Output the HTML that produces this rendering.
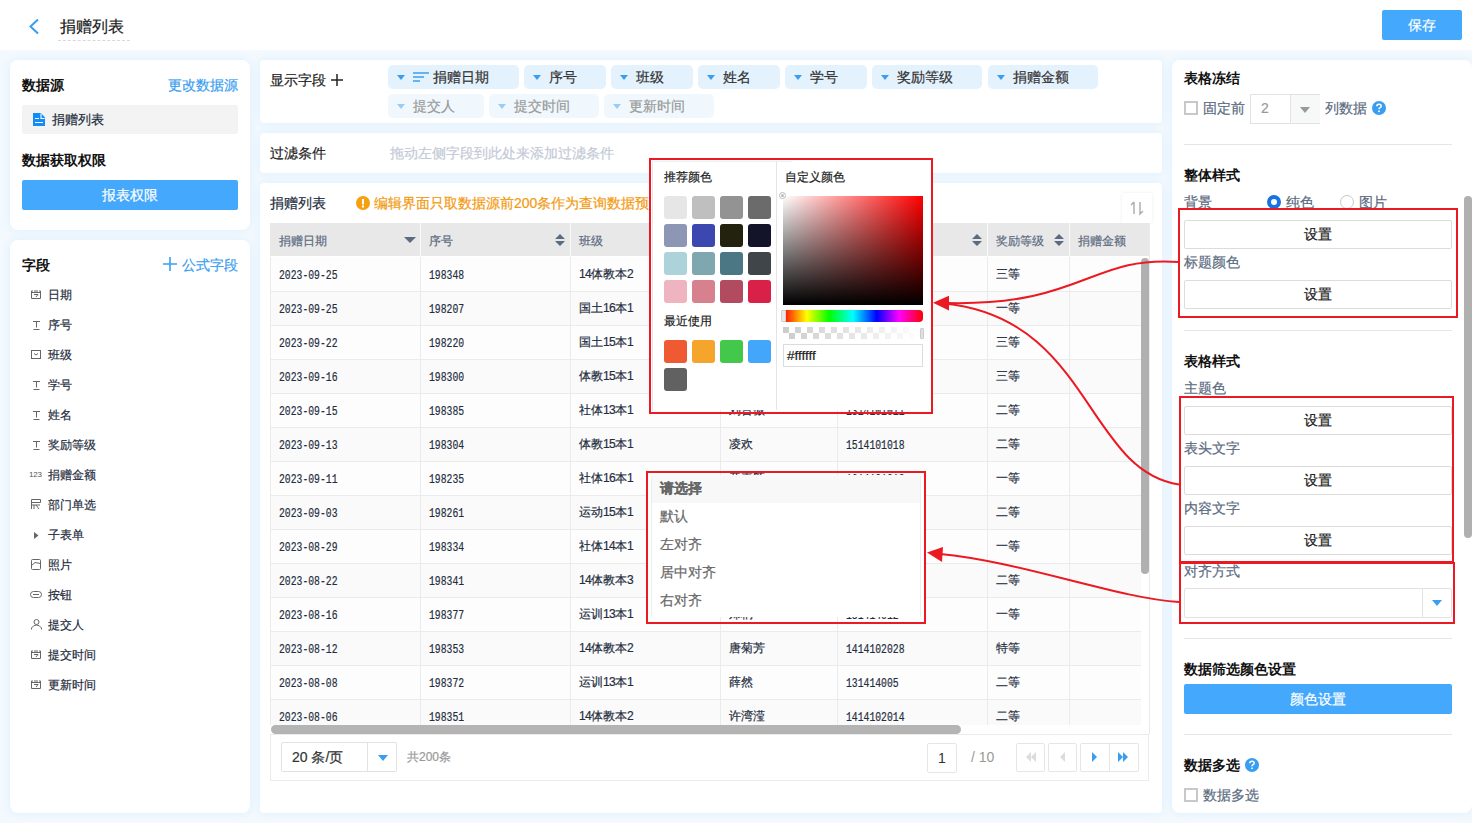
<!DOCTYPE html><html><head><meta charset="utf-8"><style>
*{box-sizing:border-box;margin:0;padding:0}
html,body{width:1472px;height:823px;overflow:hidden}
body{position:relative;background:#f3f9fe;font-family:"Liberation Sans",sans-serif;color:#333;font-size:14px;-webkit-text-stroke-width:0.2px}
.a{position:absolute;white-space:nowrap}
.p{position:absolute;background:#fff;box-shadow:0 0 10px rgba(0,160,250,.1)}
.b{font-weight:bold;color:#111;-webkit-text-stroke-width:0}
.blue{color:#3a9ef0}
.btnb{position:absolute;background:#44a8fc;color:#fff;text-align:center;border-radius:2px}
.tag{position:absolute;height:24px;background:#e4f2fd;border-radius:5px;line-height:24px;font-size:14px;color:#333;padding-left:25px;white-space:nowrap}
.tag i{position:absolute;left:9px;top:10px;width:0;height:0;border-left:4px solid transparent;border-right:4px solid transparent;border-top:5px solid #3a9ef0}
.tag.l{background:#f0f8fe;color:#9a9a9a}
.tag.l i{border-top-color:#99cdf6}
.fi{position:absolute;left:48px;font-size:12px;color:#1f2d3d;line-height:16px;white-space:nowrap}
.hd{position:absolute;font-size:12px;color:#5b6b80;line-height:14px;white-space:nowrap}
.c{position:absolute;font-size:12px;color:#1f2d3d;line-height:14px;white-space:nowrap}
.n{margin-top:1.5px;transform:scaleX(.75);transform-origin:0 0;font-size:13px;font-family:"Liberation Mono",monospace;color:#1f2d3d}
.sbtn{position:absolute;left:1184px;width:268px;height:29px;border:1px solid #dcdcdc;border-radius:2px;text-align:center;line-height:27px;font-size:14px;color:#222;background:#fff}
.lbl{position:absolute;left:1184px;font-size:14px;color:#5b6b80;line-height:16px;white-space:nowrap}
.hr{position:absolute;left:1184px;width:268px;height:1px;background:#e6e6e6}
.red{position:absolute;border:2px solid #eb1922}
.sw{position:absolute;width:23px;height:23px;border-radius:3px}
.pb{position:absolute;top:743px;width:29px;height:29px;border:1px solid #e6e6e6;border-radius:2px;background:#fff}
</style></head><body>
<div class="a" style="left:0;top:0;width:1472px;height:50px;background:#fff"></div>
<svg class="a" style="left:28px;top:18px" width="12" height="17" viewBox="0 0 12 17"><path d="M10 1.5 L2.5 8.5 L10 15.5" fill="none" stroke="#3a9ef0" stroke-width="2"/></svg>
<div class="a" style="left:60px;top:17px;font-size:16px;line-height:20px;color:#1a1a1a">捐赠列表</div>
<div class="a" style="left:58px;top:40px;width:72px;height:0;border-top:1px dashed #d8d8d8"></div>
<div class="btnb" style="left:1382px;top:10px;width:80px;height:30px;line-height:30px;font-size:14px">保存</div>
<div class="p" style="left:10px;top:60px;width:240px;height:170px;border-radius:8px"></div>
<div class="a b" style="left:22px;top:77px;font-size:14px;line-height:16px">数据源</div>
<div class="a blue" style="left:168px;top:77px;font-size:14px;line-height:16px">更改数据源</div>
<div class="a" style="left:22px;top:105px;width:216px;height:29px;background:#f3f3f3;border-radius:2px"></div>
<svg class="a" style="left:33px;top:113px" width="12" height="13" viewBox="0 0 12 13"><path d="M0 0 H8 L12 4.5 V13 H0 Z" fill="#128df5"/><path d="M8 0.5 V5.5 H11.5 M2 5.5 H6 M2 9.5 H10" fill="none" stroke="#fff" stroke-width="1.1"/></svg>
<div class="a" style="left:52px;top:112px;font-size:13px;line-height:16px;color:#1f2d3d">捐赠列表</div>
<div class="a b" style="left:22px;top:152px;font-size:14px;line-height:16px">数据获取权限</div>
<div class="btnb" style="left:22px;top:180px;width:216px;height:30px;line-height:30px;font-size:14px">报表权限</div>
<div class="p" style="left:10px;top:240px;width:240px;height:573px;border-radius:8px"></div>
<div class="a b" style="left:22px;top:257px;font-size:14px;line-height:16px">字段</div>
<svg class="a" style="left:163px;top:257px" width="14" height="14" viewBox="0 0 14 14"><path d="M7 0 V14 M0 7 H14" stroke="#3a9ef0" stroke-width="1.6"/></svg>
<div class="a blue" style="left:182px;top:257px;font-size:14px;line-height:16px">公式字段</div>
<svg class="a" style="left:31px;top:290px" width="10" height="9" viewBox="0 0 10 9"><path d="M0.5 1 V8.5 H9.5 V1 M0.5 1 H2 M3 1 H7 M8 1 H9.5 M0.5 2.5 H9.5 M3 4.5 H7 L5 7" fill="none" stroke="#666" stroke-width="1"/></svg>
<div class="fi" style="top:287px">日期</div>
<svg class="a" style="left:33px;top:321px" width="7" height="9" viewBox="0 0 7 9"><path d="M0 0.5 H7 M3.5 0.5 V6.5 M0.5 8.5 H6.5" fill="none" stroke="#666" stroke-width="1"/></svg>
<div class="fi" style="top:317px">序号</div>
<svg class="a" style="left:31px;top:350px" width="10" height="9" viewBox="0 0 10 9"><rect x="0.5" y="0.5" width="9" height="8" fill="none" stroke="#666" stroke-width="1"/><path d="M3 3.5 L5 5 L7 3.5" fill="none" stroke="#666" stroke-width="1"/></svg>
<div class="fi" style="top:347px">班级</div>
<svg class="a" style="left:33px;top:381px" width="7" height="9" viewBox="0 0 7 9"><path d="M0 0.5 H7 M3.5 0.5 V6.5 M0.5 8.5 H6.5" fill="none" stroke="#666" stroke-width="1"/></svg>
<div class="fi" style="top:377px">学号</div>
<svg class="a" style="left:33px;top:411px" width="7" height="9" viewBox="0 0 7 9"><path d="M0 0.5 H7 M3.5 0.5 V6.5 M0.5 8.5 H6.5" fill="none" stroke="#666" stroke-width="1"/></svg>
<div class="fi" style="top:407px">姓名</div>
<svg class="a" style="left:33px;top:441px" width="7" height="9" viewBox="0 0 7 9"><path d="M0 0.5 H7 M3.5 0.5 V6.5 M0.5 8.5 H6.5" fill="none" stroke="#666" stroke-width="1"/></svg>
<div class="fi" style="top:437px">奖励等级</div>
<div class="a" style="left:29px;top:471px;font-size:8px;line-height:8px;color:#555;letter-spacing:-0.2px;-webkit-text-stroke-width:0">123</div>
<div class="fi" style="top:467px">捐赠金额</div>
<svg class="a" style="left:31px;top:499px" width="10" height="10" viewBox="0 0 10 10"><path d="M0.5 10 V0.5 H9.5 V3.5 H0.5 M0.5 6 H9 M3 6 V10 M5 6 L8 10" fill="none" stroke="#666" stroke-width="1"/></svg>
<div class="fi" style="top:497px">部门单选</div>
<svg class="a" style="left:34px;top:532px" width="5" height="7" viewBox="0 0 5 7"><path d="M0 0 L4.5 3.5 L0 7Z" fill="#666"/></svg>
<div class="fi" style="top:527px">子表单</div>
<svg class="a" style="left:31px;top:559px" width="10" height="11" viewBox="0 0 10 11"><rect x="0.5" y="0.5" width="9" height="10" rx="1" fill="none" stroke="#666" stroke-width="1"/><path d="M0.5 6.5 L4 3.5 L9.5 4.5" fill="none" stroke="#666" stroke-width="1"/></svg>
<div class="fi" style="top:557px">照片</div>
<svg class="a" style="left:30px;top:591px" width="12" height="7" viewBox="0 0 12 7"><rect x="0.5" y="0.5" width="11" height="6" rx="3" fill="none" stroke="#666" stroke-width="1"/><path d="M3 3.5 H9" stroke="#666" stroke-width="1"/></svg>
<div class="fi" style="top:587px">按钮</div>
<svg class="a" style="left:31px;top:619px" width="11" height="11" viewBox="0 0 11 11"><circle cx="5.5" cy="3" r="2.5" fill="none" stroke="#666" stroke-width="1"/><path d="M0.5 10.5 V9 Q2.5 6 5.5 6 Q8.5 6 10.5 9 V10.5" fill="none" stroke="#666" stroke-width="1"/></svg>
<div class="fi" style="top:617px">提交人</div>
<svg class="a" style="left:31px;top:650px" width="10" height="9" viewBox="0 0 10 9"><path d="M0.5 1 V8.5 H9.5 V1 M0.5 1 H2 M3 1 H7 M8 1 H9.5 M0.5 2.5 H9.5 M3 4.5 H7 L5 7" fill="none" stroke="#666" stroke-width="1"/></svg>
<div class="fi" style="top:647px">提交时间</div>
<svg class="a" style="left:31px;top:680px" width="10" height="9" viewBox="0 0 10 9"><path d="M0.5 1 V8.5 H9.5 V1 M0.5 1 H2 M3 1 H7 M8 1 H9.5 M0.5 2.5 H9.5 M3 4.5 H7 L5 7" fill="none" stroke="#666" stroke-width="1"/></svg>
<div class="fi" style="top:677px">更新时间</div>
<div class="p" style="left:260px;top:60px;width:902px;height:63px;border-radius:4px"></div>
<div class="a" style="left:270px;top:72px;font-size:14px;line-height:16px;color:#222">显示字段</div>
<svg class="a" style="left:331px;top:74px" width="12" height="12" viewBox="0 0 12 12"><path d="M6 0 V12 M0 6 H12" stroke="#222" stroke-width="1.5"/></svg>
<div class="tag" style="left:388px;top:65px;width:131px;padding-left:45px"><i></i><svg style="position:absolute;left:25px;top:7px" width="16" height="10" viewBox="0 0 16 10"><path d="M0 1 H16 M0 5 H11 M0 9 H7" stroke="#3a9ef0" stroke-width="1.3"/></svg>捐赠日期</div>
<div class="tag" style="left:524px;top:65px;width:82px"><i></i>序号</div>
<div class="tag" style="left:611px;top:65px;width:82px"><i></i>班级</div>
<div class="tag" style="left:698px;top:65px;width:82px"><i></i>姓名</div>
<div class="tag" style="left:785px;top:65px;width:82px"><i></i>学号</div>
<div class="tag" style="left:872px;top:65px;width:110px"><i></i>奖励等级</div>
<div class="tag" style="left:988px;top:65px;width:110px"><i></i>捐赠金额</div>
<div class="tag l" style="left:388px;top:94px;width:96px"><i></i>提交人</div>
<div class="tag l" style="left:489px;top:94px;width:110px"><i></i>提交时间</div>
<div class="tag l" style="left:604px;top:94px;width:110px"><i></i>更新时间</div>
<div class="p" style="left:260px;top:133px;width:902px;height:40px;border-radius:4px"></div>
<div class="a" style="left:270px;top:145px;font-size:14px;line-height:16px;color:#222">过滤条件</div>
<div class="a" style="left:390px;top:145px;font-size:14px;line-height:16px;color:#c3cad6">拖动左侧字段到此处来添加过滤条件</div>
<div class="p" style="left:260px;top:183px;width:902px;height:630px;border-radius:4px"></div>
<div class="a" style="left:270px;top:195px;font-size:14px;line-height:16px;color:#1f2d3d">捐赠列表</div>
<svg class="a" style="left:356px;top:196px" width="14" height="14" viewBox="0 0 14 14"><circle cx="7" cy="7" r="7" fill="#f5a00f"/><rect x="6" y="3" width="2" height="5.5" fill="#fff"/><rect x="6" y="9.5" width="2" height="2" fill="#fff"/></svg>
<div class="a" style="left:374px;top:195px;font-size:14px;line-height:16px;color:#f39a0f">编辑界面只取数据源前200条作为查询数据预览</div>
<div class="a" style="left:1122px;top:193px;width:30px;height:30px;background:#fff;box-shadow:0 0 3px rgba(0,0,0,0.08)"></div>
<svg class="a" style="left:1129px;top:200px" width="16" height="16" viewBox="0 0 16 16"><path d="M5 2 V14 M5 2 L2 5 M11 2 V14 L14 11" fill="none" stroke="#aaa" stroke-width="1.4"/></svg>
<div class="a" style="left:270px;top:223px;width:879px;height:502px;overflow:hidden;background:#fff">
<div class="a" style="left:0;top:0;width:879px;height:33px;background:#e8e8e8"></div>
<div class="a" style="left:0;top:34px;width:871px;height:34px;background:#fdfdfd"></div>
<div class="c n" style="left:9px;top:44px">2023-09-25</div>
<div class="c n" style="left:159px;top:44px">198348</div>
<div class="c" style="left:309px;top:44px"><span style="letter-spacing:-0.7px">14</span>体教本<span style="letter-spacing:-0.7px">2</span></div>
<div class="c" style="left:459px;top:44px">王晓明</div>
<div class="c n" style="left:576px;top:44px">1414102001</div>
<div class="c" style="left:726px;top:44px">三等</div>
<div class="a" style="left:0;top:68px;width:871px;height:34px;background:#fafafa"></div>
<div class="c n" style="left:9px;top:78px">2023-09-25</div>
<div class="c n" style="left:159px;top:78px">198207</div>
<div class="c" style="left:309px;top:78px">国土<span style="letter-spacing:-0.7px">16</span>本<span style="letter-spacing:-0.7px">1</span></div>
<div class="c" style="left:459px;top:78px">李思思</div>
<div class="c n" style="left:576px;top:78px">1614101012</div>
<div class="c" style="left:726px;top:78px">一等</div>
<div class="a" style="left:0;top:102px;width:871px;height:34px;background:#fdfdfd"></div>
<div class="c n" style="left:9px;top:112px">2023-09-22</div>
<div class="c n" style="left:159px;top:112px">198220</div>
<div class="c" style="left:309px;top:112px">国土<span style="letter-spacing:-0.7px">15</span>本<span style="letter-spacing:-0.7px">1</span></div>
<div class="c" style="left:459px;top:112px">张伟</div>
<div class="c n" style="left:576px;top:112px">1514101006</div>
<div class="c" style="left:726px;top:112px">三等</div>
<div class="a" style="left:0;top:136px;width:871px;height:34px;background:#fafafa"></div>
<div class="c n" style="left:9px;top:146px">2023-09-16</div>
<div class="c n" style="left:159px;top:146px">198300</div>
<div class="c" style="left:309px;top:146px">体教<span style="letter-spacing:-0.7px">15</span>本<span style="letter-spacing:-0.7px">1</span></div>
<div class="c" style="left:459px;top:146px">赵敏</div>
<div class="c n" style="left:576px;top:146px">1514101022</div>
<div class="c" style="left:726px;top:146px">三等</div>
<div class="a" style="left:0;top:170px;width:871px;height:34px;background:#fdfdfd"></div>
<div class="c n" style="left:9px;top:180px">2023-09-15</div>
<div class="c n" style="left:159px;top:180px">198385</div>
<div class="c" style="left:309px;top:180px">社体<span style="letter-spacing:-0.7px">13</span>本<span style="letter-spacing:-0.7px">1</span></div>
<div class="c" style="left:459px;top:180px">刘晋傲</div>
<div class="c n" style="left:576px;top:180px">1314101011</div>
<div class="c" style="left:726px;top:180px">二等</div>
<div class="a" style="left:0;top:204px;width:871px;height:34px;background:#fafafa"></div>
<div class="c n" style="left:9px;top:214px">2023-09-13</div>
<div class="c n" style="left:159px;top:214px">198304</div>
<div class="c" style="left:309px;top:214px">体教<span style="letter-spacing:-0.7px">15</span>本<span style="letter-spacing:-0.7px">1</span></div>
<div class="c" style="left:459px;top:214px">凌欢</div>
<div class="c n" style="left:576px;top:214px">1514101018</div>
<div class="c" style="left:726px;top:214px">二等</div>
<div class="a" style="left:0;top:238px;width:871px;height:34px;background:#fdfdfd"></div>
<div class="c n" style="left:9px;top:248px">2023-09-11</div>
<div class="c n" style="left:159px;top:248px">198235</div>
<div class="c" style="left:309px;top:248px">社体<span style="letter-spacing:-0.7px">16</span>本<span style="letter-spacing:-0.7px">1</span></div>
<div class="c" style="left:459px;top:248px">黄嘉颖</div>
<div class="c n" style="left:576px;top:248px">1614101013</div>
<div class="c" style="left:726px;top:248px">一等</div>
<div class="a" style="left:0;top:272px;width:871px;height:34px;background:#fafafa"></div>
<div class="c n" style="left:9px;top:282px">2023-09-03</div>
<div class="c n" style="left:159px;top:282px">198261</div>
<div class="c" style="left:309px;top:282px">运动<span style="letter-spacing:-0.7px">15</span>本<span style="letter-spacing:-0.7px">1</span></div>
<div class="c" style="left:459px;top:282px">陈思</div>
<div class="c n" style="left:576px;top:282px">1514101008</div>
<div class="c" style="left:726px;top:282px">二等</div>
<div class="a" style="left:0;top:306px;width:871px;height:34px;background:#fdfdfd"></div>
<div class="c n" style="left:9px;top:316px">2023-08-29</div>
<div class="c n" style="left:159px;top:316px">198334</div>
<div class="c" style="left:309px;top:316px">社体<span style="letter-spacing:-0.7px">14</span>本<span style="letter-spacing:-0.7px">1</span></div>
<div class="c" style="left:459px;top:316px">周婷</div>
<div class="c n" style="left:576px;top:316px">1414101009</div>
<div class="c" style="left:726px;top:316px">一等</div>
<div class="a" style="left:0;top:340px;width:871px;height:34px;background:#fafafa"></div>
<div class="c n" style="left:9px;top:350px">2023-08-22</div>
<div class="c n" style="left:159px;top:350px">198341</div>
<div class="c" style="left:309px;top:350px"><span style="letter-spacing:-0.7px">14</span>体教本<span style="letter-spacing:-0.7px">3</span></div>
<div class="c" style="left:459px;top:350px">吴昊</div>
<div class="c n" style="left:576px;top:350px">1414103011</div>
<div class="c" style="left:726px;top:350px">二等</div>
<div class="a" style="left:0;top:374px;width:871px;height:34px;background:#fdfdfd"></div>
<div class="c n" style="left:9px;top:384px">2023-08-16</div>
<div class="c n" style="left:159px;top:384px">198377</div>
<div class="c" style="left:309px;top:384px">运训<span style="letter-spacing:-0.7px">13</span>本<span style="letter-spacing:-0.7px">1</span></div>
<div class="c" style="left:459px;top:384px">郑桐</div>
<div class="c n" style="left:576px;top:384px">131414012</div>
<div class="c" style="left:726px;top:384px">一等</div>
<div class="a" style="left:0;top:408px;width:871px;height:34px;background:#fafafa"></div>
<div class="c n" style="left:9px;top:418px">2023-08-12</div>
<div class="c n" style="left:159px;top:418px">198353</div>
<div class="c" style="left:309px;top:418px"><span style="letter-spacing:-0.7px">14</span>体教本<span style="letter-spacing:-0.7px">2</span></div>
<div class="c" style="left:459px;top:418px">唐菊芳</div>
<div class="c n" style="left:576px;top:418px">1414102028</div>
<div class="c" style="left:726px;top:418px">特等</div>
<div class="a" style="left:0;top:442px;width:871px;height:34px;background:#fdfdfd"></div>
<div class="c n" style="left:9px;top:452px">2023-08-08</div>
<div class="c n" style="left:159px;top:452px">198372</div>
<div class="c" style="left:309px;top:452px">运训<span style="letter-spacing:-0.7px">13</span>本<span style="letter-spacing:-0.7px">1</span></div>
<div class="c" style="left:459px;top:452px">薛然</div>
<div class="c n" style="left:576px;top:452px">131414005</div>
<div class="c" style="left:726px;top:452px">二等</div>
<div class="a" style="left:0;top:476px;width:871px;height:34px;background:#fafafa"></div>
<div class="c n" style="left:9px;top:486px">2023-08-06</div>
<div class="c n" style="left:159px;top:486px">198351</div>
<div class="c" style="left:309px;top:486px"><span style="letter-spacing:-0.7px">14</span>体教本<span style="letter-spacing:-0.7px">2</span></div>
<div class="c" style="left:459px;top:486px">许湾滢</div>
<div class="c n" style="left:576px;top:486px">1414102014</div>
<div class="c" style="left:726px;top:486px">二等</div>
<div class="a" style="left:0;top:68px;width:871px;height:1px;background:#ebebeb"></div>
<div class="a" style="left:0;top:102px;width:871px;height:1px;background:#ebebeb"></div>
<div class="a" style="left:0;top:136px;width:871px;height:1px;background:#ebebeb"></div>
<div class="a" style="left:0;top:170px;width:871px;height:1px;background:#ebebeb"></div>
<div class="a" style="left:0;top:204px;width:871px;height:1px;background:#ebebeb"></div>
<div class="a" style="left:0;top:238px;width:871px;height:1px;background:#ebebeb"></div>
<div class="a" style="left:0;top:272px;width:871px;height:1px;background:#ebebeb"></div>
<div class="a" style="left:0;top:306px;width:871px;height:1px;background:#ebebeb"></div>
<div class="a" style="left:0;top:340px;width:871px;height:1px;background:#ebebeb"></div>
<div class="a" style="left:0;top:374px;width:871px;height:1px;background:#ebebeb"></div>
<div class="a" style="left:0;top:408px;width:871px;height:1px;background:#ebebeb"></div>
<div class="a" style="left:0;top:442px;width:871px;height:1px;background:#ebebeb"></div>
<div class="a" style="left:0;top:476px;width:871px;height:1px;background:#ebebeb"></div>
<div class="a" style="left:0;top:510px;width:871px;height:1px;background:#ebebeb"></div>
<div class="a" style="left:0px;top:34px;width:1px;height:500px;background:#ebebeb"></div>
<div class="a" style="left:150px;top:34px;width:1px;height:500px;background:#ebebeb"></div>
<div class="a" style="left:150px;top:0;width:1px;height:34px;background:#fafafa"></div>
<div class="a" style="left:300px;top:34px;width:1px;height:500px;background:#ebebeb"></div>
<div class="a" style="left:300px;top:0;width:1px;height:34px;background:#fafafa"></div>
<div class="a" style="left:450px;top:34px;width:1px;height:500px;background:#ebebeb"></div>
<div class="a" style="left:450px;top:0;width:1px;height:34px;background:#fafafa"></div>
<div class="a" style="left:567px;top:34px;width:1px;height:500px;background:#ebebeb"></div>
<div class="a" style="left:567px;top:0;width:1px;height:34px;background:#fafafa"></div>
<div class="a" style="left:717px;top:34px;width:1px;height:500px;background:#ebebeb"></div>
<div class="a" style="left:717px;top:0;width:1px;height:34px;background:#fafafa"></div>
<div class="a" style="left:799px;top:34px;width:1px;height:500px;background:#ebebeb"></div>
<div class="a" style="left:799px;top:0;width:1px;height:34px;background:#fafafa"></div>
<div class="hd" style="left:9px;top:11px">捐赠日期</div>
<div class="hd" style="left:159px;top:11px">序号</div>
<div class="hd" style="left:309px;top:11px">班级</div>
<div class="hd" style="left:459px;top:11px">姓名</div>
<div class="hd" style="left:576px;top:11px">学号</div>
<div class="hd" style="left:726px;top:11px">奖励等级</div>
<div class="hd" style="left:808px;top:11px">捐赠金额</div>
<svg class="a" style="left:134px;top:14px" width="12" height="6" viewBox="0 0 12 6"><path d="M0 0 H12 L6 6Z" fill="#5b6b80"/></svg>
<svg class="a" style="left:285px;top:11px" width="10" height="12" viewBox="0 0 10 12"><path d="M0 5 L5 0 L10 5Z M0 7 H10 L5 12Z" fill="#5b6b80"/></svg>
<svg class="a" style="left:435px;top:11px" width="10" height="12" viewBox="0 0 10 12"><path d="M0 5 L5 0 L10 5Z M0 7 H10 L5 12Z" fill="#5b6b80"/></svg>
<svg class="a" style="left:552px;top:11px" width="10" height="12" viewBox="0 0 10 12"><path d="M0 5 L5 0 L10 5Z M0 7 H10 L5 12Z" fill="#5b6b80"/></svg>
<svg class="a" style="left:702px;top:11px" width="10" height="12" viewBox="0 0 10 12"><path d="M0 5 L5 0 L10 5Z M0 7 H10 L5 12Z" fill="#5b6b80"/></svg>
<svg class="a" style="left:784px;top:11px" width="10" height="12" viewBox="0 0 10 12"><path d="M0 5 L5 0 L10 5Z M0 7 H10 L5 12Z" fill="#5b6b80"/></svg>
</div>
<div class="a" style="left:1149px;top:223px;width:1px;height:511px;background:#ebebeb"></div>
<div class="a" style="left:1141px;top:258px;width:8px;height:316px;background:#b0b0b0;border-radius:4px"></div>
<div class="a" style="left:271px;top:725px;width:690px;height:9px;background:#b4b4b4;border-radius:5px"></div>
<div class="a" style="left:270px;top:734px;width:879px;height:47px;border:1px solid #ebebeb"></div>
<div class="a" style="left:281px;top:742px;width:116px;height:30px;border:1px solid #e2e2e2;border-radius:2px;background:#fff"></div>
<div class="a" style="left:367px;top:743px;width:1px;height:28px;background:#e2e2e2"></div>
<div class="a" style="left:292px;top:749px;font-size:14px;line-height:16px;color:#333">20 条/页</div>
<svg class="a" style="left:378px;top:755px" width="10" height="6" viewBox="0 0 10 6"><path d="M0 0 H10 L5 6Z" fill="#3a9ef0"/></svg>
<div class="a" style="left:407px;top:750px;font-size:12px;line-height:14px;color:#999">共200条</div>
<div class="a" style="left:927px;top:743px;width:30px;height:30px;border:1px solid #e6e6e6;border-radius:2px;text-align:center;line-height:28px;font-size:14px;color:#333;-webkit-text-stroke-width:0">1</div>
<div class="a" style="left:971px;top:749px;font-size:14px;line-height:16px;color:#999;-webkit-text-stroke-width:0">/ 10</div>
<div class="pb" style="left:1016px"></div><div class="pb" style="left:1048px"></div><div class="pb" style="left:1080px;width:59px"></div><div class="a" style="left:1109px;top:744px;width:1px;height:27px;background:#e6e6e6"></div>
<svg class="a" style="left:1025px;top:751px" width="12" height="12" viewBox="0 0 12 12"><path d="M6 1 L1 6 L6 11Z M11 1 L6 6 L11 11Z" fill="#dcdcdc"/></svg>
<svg class="a" style="left:1059px;top:751px" width="6" height="12" viewBox="0 0 6 12"><path d="M6 1 L1 6 L6 11Z" fill="#dcdcdc"/></svg>
<svg class="a" style="left:1092px;top:751px" width="6" height="12" viewBox="0 0 6 12"><path d="M0 1 L5 6 L0 11Z" fill="#3a9ef0"/></svg>
<svg class="a" style="left:1118px;top:751px" width="12" height="12" viewBox="0 0 12 12"><path d="M0 1 L5 6 L0 11Z M5 1 L10 6 L5 11Z" fill="#3a9ef0"/></svg>
<div class="p" style="left:1172px;top:60px;width:300px;height:753px;border-radius:8px"></div>
<div class="a b" style="left:1184px;top:70px;font-size:14px;line-height:16px">表格冻结</div>
<div class="a" style="left:1184px;top:101px;width:14px;height:14px;border:2px solid #c8c8c8"></div>
<div class="lbl" style="top:100px">&nbsp;</div><div class="a" style="left:1203px;top:100px;font-size:14px;line-height:16px;color:#5b6b80">固定前</div>
<div class="a" style="left:1250px;top:94px;width:70px;height:30px;border:1px solid #e2e2e2;border-right:none;background:#fff"></div>
<div class="a" style="left:1290px;top:95px;width:30px;height:28px;background:#f7f8f8;border-left:1px solid #e2e2e2"></div>
<div class="a" style="left:1261px;top:100px;font-size:14px;line-height:16px;color:#999">2</div>
<svg class="a" style="left:1300px;top:107px" width="10" height="6" viewBox="0 0 10 6"><path d="M0 0 H10 L5 6Z" fill="#999"/></svg>
<div class="a" style="left:1325px;top:100px;font-size:14px;line-height:16px;color:#5b6b80">列数据</div>
<svg class="a" style="left:1372px;top:101px" width="14" height="14" viewBox="0 0 14 14"><circle cx="7" cy="7" r="7" fill="#3a9ef0"/><path d="M4.8 5.3 Q4.8 3.2 7 3.2 Q9.2 3.2 9.2 5.1 Q9.2 6.3 7.8 6.9 Q7 7.3 7 8.3" fill="none" stroke="#fff" stroke-width="1.5"/><rect x="6.2" y="9.5" width="1.6" height="1.6" fill="#fff"/></svg>
<div class="hr" style="top:144px"></div>
<div class="a b" style="left:1184px;top:167px;font-size:14px;line-height:16px">整体样式</div>
<div class="lbl" style="top:194px">背景</div>
<div class="a" style="left:1267px;top:195px;width:14px;height:14px;border-radius:50%;border:4px solid #1773e0;background:#fff"></div>
<div class="a" style="left:1286px;top:194px;font-size:14px;line-height:16px;color:#5b6b80">纯色</div>
<div class="a" style="left:1340px;top:195px;width:14px;height:14px;border-radius:50%;border:1px solid #c8c8c8;background:#fff"></div>
<div class="a" style="left:1359px;top:194px;font-size:14px;line-height:16px;color:#5b6b80">图片</div>
<div class="sbtn" style="top:220px">设置</div>
<div class="lbl" style="top:254px">标题颜色</div>
<div class="sbtn" style="top:280px">设置</div>
<div class="hr" style="top:330px"></div>
<div class="a b" style="left:1184px;top:353px;font-size:14px;line-height:16px">表格样式</div>
<div class="lbl" style="top:380px">主题色</div>
<div class="sbtn" style="top:406px">设置</div>
<div class="lbl" style="top:440px">表头文字</div>
<div class="sbtn" style="top:466px">设置</div>
<div class="lbl" style="top:500px">内容文字</div>
<div class="sbtn" style="top:526px">设置</div>
<div class="lbl" style="top:563px">对齐方式</div>
<div class="a" style="left:1184px;top:588px;width:268px;height:30px;border:1px solid #e2e2e2;border-radius:2px;background:#fff"></div>
<div class="a" style="left:1422px;top:589px;width:1px;height:28px;background:#e2e2e2"></div>
<svg class="a" style="left:1432px;top:600px" width="10" height="6" viewBox="0 0 10 6"><path d="M0 0 H10 L5 6Z" fill="#3a9ef0"/></svg>
<div class="hr" style="top:638px"></div>
<div class="a b" style="left:1184px;top:661px;font-size:14px;line-height:16px">数据筛选颜色设置</div>
<div class="btnb" style="left:1184px;top:684px;width:268px;height:30px;line-height:30px;font-size:14px">颜色设置</div>
<div class="hr" style="top:734px"></div>
<div class="a b" style="left:1184px;top:757px;font-size:14px;line-height:16px">数据多选</div>
<svg class="a" style="left:1245px;top:758px" width="14" height="14" viewBox="0 0 14 14"><circle cx="7" cy="7" r="7" fill="#3a9ef0"/><path d="M4.8 5.3 Q4.8 3.2 7 3.2 Q9.2 3.2 9.2 5.1 Q9.2 6.3 7.8 6.9 Q7 7.3 7 8.3" fill="none" stroke="#fff" stroke-width="1.5"/><rect x="6.2" y="9.5" width="1.6" height="1.6" fill="#fff"/></svg>
<div class="a" style="left:1184px;top:788px;width:14px;height:14px;border:2px solid #c8c8c8"></div>
<div class="a" style="left:1203px;top:787px;font-size:14px;line-height:16px;color:#5b6b80">数据多选</div>
<div class="a" style="left:1464px;top:196px;width:8px;height:342px;background:#b0b0b0;border-radius:4px"></div>
<div class="red" style="left:1178px;top:208px;width:280px;height:110px"></div>
<div class="red" style="left:1179px;top:396px;width:275px;height:167px"></div>
<div class="red" style="left:1179px;top:562px;width:276px;height:62px"></div>
<div class="a" style="left:651px;top:160px;width:280px;height:250px;background:#fff"></div>
<div class="a" style="left:649px;top:158px;width:284px;height:256px;border:2px solid #eb1922"></div>
<div class="a" style="left:776px;top:161px;width:1px;height:249px;background:#e4e4e4"></div>
<div class="a" style="left:652px;top:161px;width:1px;height:250px;background:#e6e6e6"></div>
<div class="a" style="left:652px;top:161px;width:140px;height:1px;background:#f0f0f0"></div>
<div class="a" style="left:664px;top:169px;font-size:12px;line-height:16px;color:#222">推荐颜色</div>
<div class="a" style="left:785px;top:169px;font-size:12px;line-height:16px;color:#222">自定义颜色</div>
<div class="sw" style="left:664px;top:196px;background:#e6e6e6"></div>
<div class="sw" style="left:692px;top:196px;background:#bfbfbf"></div>
<div class="sw" style="left:720px;top:196px;background:#939393"></div>
<div class="sw" style="left:748px;top:196px;background:#6b6b6b"></div>
<div class="sw" style="left:664px;top:224px;background:#8d97b5"></div>
<div class="sw" style="left:692px;top:224px;background:#3c47b0"></div>
<div class="sw" style="left:720px;top:224px;background:#22220f"></div>
<div class="sw" style="left:748px;top:224px;background:#13132a"></div>
<div class="sw" style="left:664px;top:252px;background:#acd3da"></div>
<div class="sw" style="left:692px;top:252px;background:#7fa7af"></div>
<div class="sw" style="left:720px;top:252px;background:#4b7784"></div>
<div class="sw" style="left:748px;top:252px;background:#3f4549"></div>
<div class="sw" style="left:664px;top:280px;background:#eeb5c1"></div>
<div class="sw" style="left:692px;top:280px;background:#d7818f"></div>
<div class="sw" style="left:720px;top:280px;background:#b34b60"></div>
<div class="sw" style="left:748px;top:280px;background:#d82048"></div>
<div class="a" style="left:664px;top:313px;font-size:12px;line-height:16px;color:#222">最近使用</div>
<div class="sw" style="left:664px;top:340px;background:#f05a33"></div>
<div class="sw" style="left:692px;top:340px;background:#f5a52b"></div>
<div class="sw" style="left:720px;top:340px;background:#43c84b"></div>
<div class="sw" style="left:748px;top:340px;background:#42a7fb"></div>
<div class="sw" style="left:664px;top:368px;background:#616161"></div>
<div class="a" style="left:783px;top:196px;width:140px;height:109px;background:linear-gradient(to top,#000,rgba(0,0,0,0)),linear-gradient(to right,#fff,#f00)"></div>
<div class="a" style="left:779px;top:192px;width:7px;height:7px;border-radius:50%;border:1px solid #bbb;background:#fff"></div><div class="a" style="left:781px;top:194px;width:3px;height:3px;border-radius:50%;background:#bbb"></div>
<div class="a" style="left:783px;top:310px;width:140px;height:12px;border-radius:4px;background:linear-gradient(to right,#f00 0%,#ff0 17%,#0f0 33%,#0ff 50%,#00f 67%,#f0f 83%,#f00 100%)"></div>
<div class="a" style="left:781px;top:310px;width:5px;height:12px;background:#e8e8e8;border:1px solid #d0d0d0;border-radius:1px"></div>
<div class="a" style="left:783px;top:327px;width:140px;height:12px;background-image:linear-gradient(45deg,#ccc 25%,transparent 25%,transparent 75%,#ccc 75%),linear-gradient(45deg,#ccc 25%,transparent 25%,transparent 75%,#ccc 75%);background-size:12px 12px;background-position:6px 0,0 6px"></div>
<div class="a" style="left:783px;top:327px;width:140px;height:12px;background:linear-gradient(to right,rgba(255,255,255,0),#fff)"></div>
<div class="a" style="left:920px;top:328px;width:4px;height:11px;background:#e0e0e0;border:1px solid #ccc;border-radius:1px"></div>
<div class="a" style="left:783px;top:344px;width:140px;height:23px;border:1px solid #dcdcdc;background:#fff"></div>
<div class="a" style="left:787px;top:348px;font-size:13.5px;line-height:16px;color:#222">#ffffff</div>
<div class="a" style="left:648px;top:476px;width:276px;height:141px;background:#fff"></div>
<div class="a" style="left:651px;top:476px;width:1px;height:141px;background:#eeeeee"></div>
<div class="a" style="left:920px;top:476px;width:1px;height:141px;background:#eeeeee"></div>
<div class="a" style="left:646px;top:471px;width:280px;height:153px;border:2px solid #eb1922"></div>
<div class="a" style="left:652px;top:475px;width:268px;height:28px;background:#f8f8f8"></div>
<div class="a" style="left:660px;top:481px;font-size:13.5px;line-height:16px;color:#666;font-weight:bold">请选择</div>
<div class="a" style="left:660px;top:509px;font-size:13.5px;line-height:16px;color:#666">默认</div>
<div class="a" style="left:660px;top:537px;font-size:13.5px;line-height:16px;color:#666">左对齐</div>
<div class="a" style="left:660px;top:565px;font-size:13.5px;line-height:16px;color:#666">居中对齐</div>
<div class="a" style="left:660px;top:593px;font-size:13.5px;line-height:16px;color:#666">右对齐</div>
<svg class="a" style="left:0;top:0" width="1472" height="823" viewBox="0 0 1472 823">
<g fill="none" stroke="#eb1922" stroke-width="2">
<path d="M1179 262 C1090.3 255.4 1082.9 306.4 946 303"/>
<path d="M1179 484.5 C1086.2 470.7 1090.2 317.6 944 303.5"/>
<path d="M1179 602 C1119.6 598.8 1018.5 561 940 554"/>
</g>
<g fill="#eb1922">
<path d="M933 302.8 L949 295.8 L949 310.6Z"/>
<path d="M927 552.5 L943 547 L942 562Z"/>
</g></svg>
</body></html>
